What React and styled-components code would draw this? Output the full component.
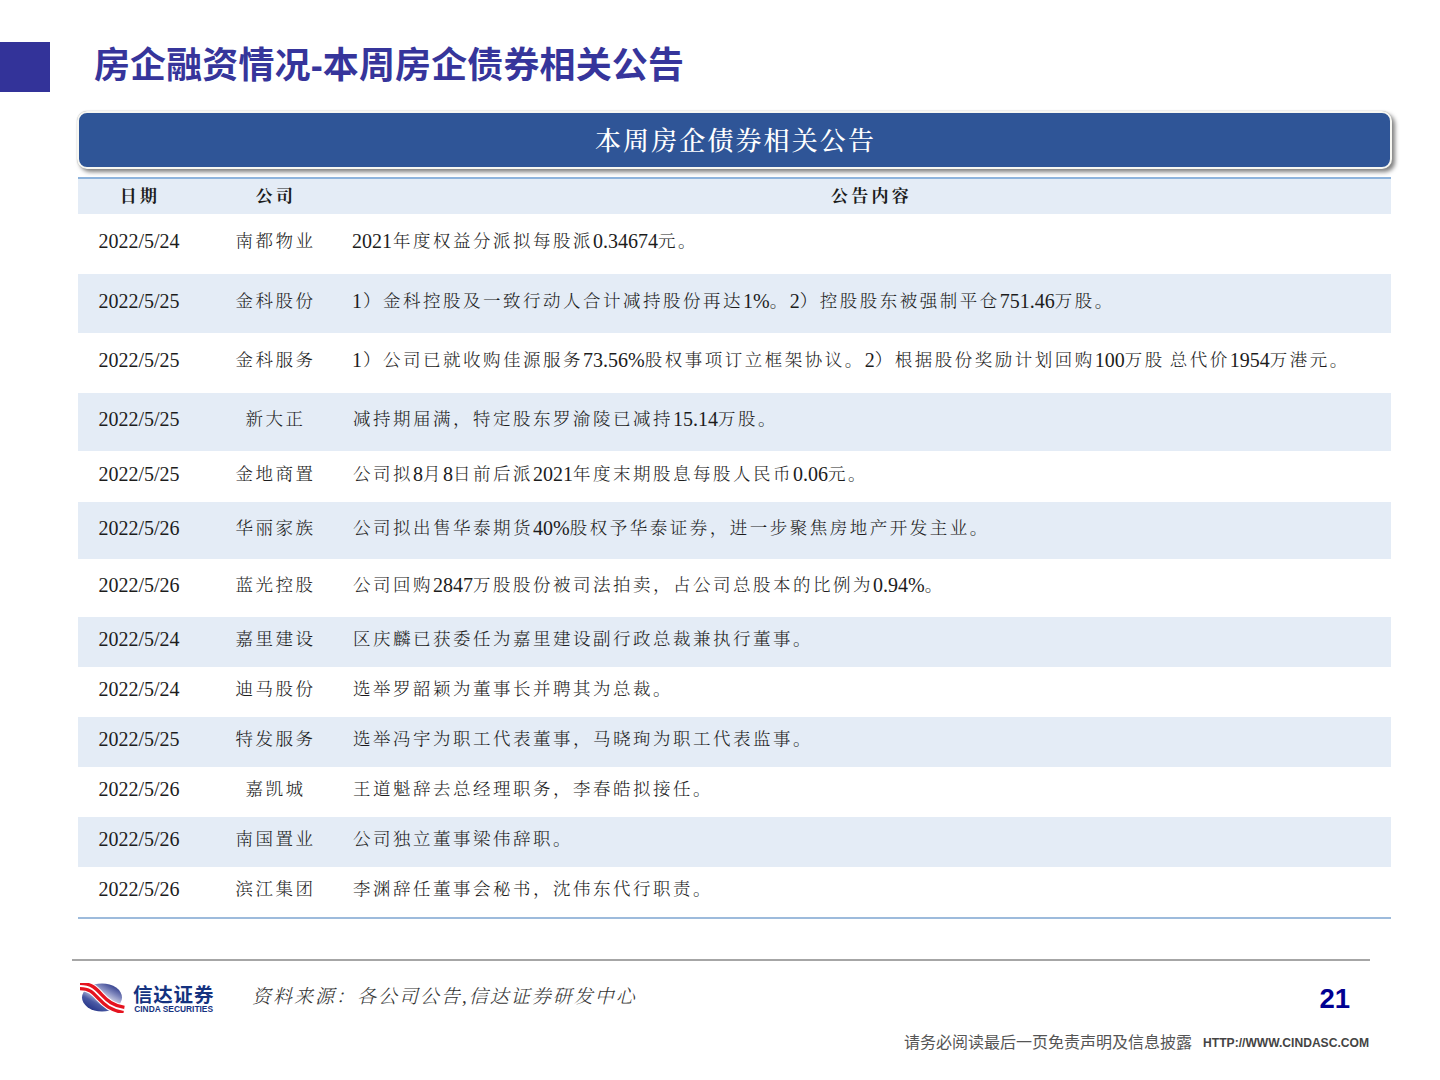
import React from "react";
import styled, { createGlobalStyle } from "styled-components";

const Global = createGlobalStyle`
  html, body { margin: 0; padding: 0; background: #fff; }
  body { font-family: "Liberation Serif", "Noto Serif CJK SC", "Noto Sans CJK SC", serif; }
`;

const Page = styled.div`
  width: 1440px;
  height: 1080px;
  display: flex;
  flex-direction: column;
  overflow: hidden;
`;
const TitleBar = styled.header`
  display: flex;
  align-items: center;
  gap: 44px;
  margin-top: 42px;
  height: 50px;
`;
const Square = styled.div`
  width: 50px;
  height: 50px;
  background: #333399;
`;
const Title = styled.h1`
  margin: 0;
  padding-bottom: 2px;
  font: bold 36px/48px "Liberation Sans", "Noto Sans CJK SC", sans-serif;
  letter-spacing: 0.12px;
  color: #36359b;
  white-space: nowrap;
`;
const Main = styled.main`
  width: 1313px;
  margin: 19px 0 0 78px;
  display: flex;
  flex-direction: column;
`;
const Banner = styled.div`
  height: 51px;
  padding: 3px 0 0 2px;
  border: 2px solid #f7f7f2;
  border-radius: 10px;
  background: #2f5597;
  box-shadow: 0 0 1px #9a9a9a, 3px 3px 4px rgba(0, 0, 0, 0.5);
  color: #fff;
  font-size: 26px;
  font-weight: 500;
  letter-spacing: 2.1px;
  line-height: 51px;
  text-align: center;
  margin: 0 -1px 8px -1px;
`;
const Grid = styled.div`
  border-top: 2px solid #8db3dc;
  border-bottom: 2px solid #9dbbdc;
`;
const Row = styled.div`
  display: grid;
  grid-template-columns: 122px 150px 1fr;
  align-items: center;
  height: ${(p) => p.$h}px;
  padding-bottom: ${(p) => (p.$head ? 0 : 6)}px;
  box-sizing: border-box;
  background: ${(p) => (p.$shade ? "#e4ecf6" : "#fff")};
  color: #1c1c1c;
  font-size: ${(p) => (p.$head ? 17 : 20)}px;
  font-weight: ${(p) => (p.$head ? 700 : 400)};
  line-height: 26px;
  white-space: nowrap;
`;
const Center = styled.div`
  text-align: center;
  letter-spacing: ${(p) => (p.$head ? 3.3 : 0)}px;
  text-indent: ${(p) => (p.$head ? 2 : 0)}px;
`;
const Body = styled.div`
  padding-left: 2px;
`;
const Cjk = styled.span`
  font-size: 17.5px;
  letter-spacing: 2.5px;
  font-weight: 300;
  vertical-align: 1px;
  margin-left: ${(p) => (p.$lead ? 1 : 0)}px;
`;
const Footer = styled.footer`
  margin: 40px 70px 0 72px;
  padding: 22px 0 0 7px;
  border-top: 2px solid #a6a6a6;
  display: flex;
  align-items: flex-start;
`;
const Logo = styled.div`
  display: flex;
  align-items: flex-start;
  gap: 8px;
  width: 173px;
  flex: none;
`;
const LogoWords = styled.div`
  display: flex;
  flex-direction: column;
  align-items: center;
  gap: 2px;
  color: #14327f;
  font-family: "Liberation Sans", "Noto Sans CJK SC", sans-serif;
  font-weight: 700;
  padding-top: 5px;
`;
const LogoCn = styled.span`
  font-size: 19.5px;
  line-height: 15px;
  letter-spacing: 0.8px;
`;
const LogoEn = styled.span`
  font-size: 8.4px;
  line-height: 8px;
  white-space: nowrap;
`;
const Source = styled.div`
  margin-top: 1px;
  font-size: 19px;
  font-style: italic;
  font-weight: 300;
  color: #333;
  letter-spacing: 2px;
  line-height: 26px;
  white-space: nowrap;
`;
const RightColumn = styled.div`
  margin-left: auto;
  display: flex;
  flex-direction: column;
  align-items: flex-end;
`;
const PageNo = styled.div`
  margin: 1px 20px 0 0;
  font: bold 27.5px/30px "Liberation Sans", sans-serif;
  color: #000092;
`;
const Notice = styled.div`
  display: flex;
  align-items: center;
  gap: 11px;
  margin-top: 15px;
  font-family: "Liberation Sans", "Noto Sans CJK SC", sans-serif;
`;
const Disclaimer = styled.span`
  font-size: 16px;
  color: #555;
`;
const Url = styled.span`
  margin-right: 1px;
  padding-top: 3px;
  font-size: 12.1px;
  font-weight: 700;
  color: #444;
`;

const rows = [
  ["2022/5/24", "南都物业", "2021年度权益分派拟每股派0.34674元。", 60, false],
  ["2022/5/25", "金科股份", "1）金科控股及一致行动人合计减持股份再达1%。2）控股股东被强制平仓751.46万股。", 59, true],
  ["2022/5/25", "金科服务", "1）公司已就收购佳源服务73.56%股权事项订立框架协议。2）根据股份奖励计划回购100万股 总代价1954万港元。", 60, false],
  ["2022/5/25", "新大正", "减持期届满，特定股东罗渝陵已减持15.14万股。", 58, true],
  ["2022/5/25", "金地商置", "公司拟8月8日前后派2021年度末期股息每股人民币0.06元。", 51, false],
  ["2022/5/26", "华丽家族", "公司拟出售华泰期货40%股权予华泰证券，进一步聚焦房地产开发主业。", 57, true],
  ["2022/5/26", "蓝光控股", "公司回购2847万股股份被司法拍卖，占公司总股本的比例为0.94%。", 58, false],
  ["2022/5/24", "嘉里建设", "区庆麟已获委任为嘉里建设副行政总裁兼执行董事。", 50, true],
  ["2022/5/24", "迪马股份", "选举罗韶颖为董事长并聘其为总裁。", 50, false],
  ["2022/5/25", "特发服务", "选举冯宇为职工代表董事，马晓珣为职工代表监事。", 50, true],
  ["2022/5/26", "嘉凯城", "王道魁辞去总经理职务，李春皓拟接任。", 50, false],
  ["2022/5/26", "南国置业", "公司独立董事梁伟辞职。", 50, true],
  ["2022/5/26", "滨江集团", "李渊辞任董事会秘书，沈伟东代行职责。", 50, false],
];

const Mixed = ({ text }) =>
  text.split(/([\u2E80-\uFFEF]+)/).map((part, i) =>
    /[\u2E80-\uFFEF]/.test(part) ? <Cjk key={i} $lead={i === 1}>{part}</Cjk> : part
  );

const LogoMark = () => (
  <svg width="46" height="30" viewBox="0 0 46 30">
    <defs>
      <linearGradient id="orb" x1="0.1" y1="1" x2="0.9" y2="0">
        <stop offset="0" stopColor="#16247c" />
        <stop offset="0.3" stopColor="#4a5aa4" />
        <stop offset="0.52" stopColor="#d8daea" />
        <stop offset="0.72" stopColor="#7f87bd" />
        <stop offset="1" stopColor="#101f78" />
      </linearGradient>
    </defs>
    <ellipse cx="23" cy="14.5" rx="20" ry="14" fill="url(#orb)" />
    <path d="M1 3 C12 3 16 8 21 13.5 C27 20 33 25 45 27" fill="none" stroke="#fff" strokeWidth="10.5" />
    <path d="M1 3 C12 3 16 8 21 13.5 C27 20 33 25 45 27" fill="none" stroke="#e5131f" strokeWidth="8.5" />
    <path d="M1 3 C12 3 16 8 21 13.5 C27 20 33 25 45 27" fill="none" stroke="#fff" strokeWidth="1.8" />
  </svg>
);

export default function App() {
  return (
    <Page>
      <Global />
      <TitleBar>
        <Square />
        <Title>房企融资情况-本周房企债券相关公告</Title>
      </TitleBar>
      <Main>
        <Banner>本周房企债券相关公告</Banner>
        <Grid>
          <Row $h={35} $head $shade>
            <Center $head>日期</Center>
            <Center $head>公司</Center>
            <Center $head>公告内容</Center>
          </Row>
          {rows.map(([d, c, t, h, s], i) => (
            <Row key={i} $h={h} $shade={s}>
              <Center>{d}</Center>
              <Center><Mixed text={c} /></Center>
              <Body><Mixed text={t} /></Body>
            </Row>
          ))}
        </Grid>
      </Main>
      <Footer>
        <Logo>
          <LogoMark />
          <LogoWords>
            <LogoCn>信达证券</LogoCn>
            <LogoEn>CINDA SECURITIES</LogoEn>
          </LogoWords>
        </Logo>
        <Source>资料来源：各公司公告,信达证券研发中心</Source>
        <RightColumn>
          <PageNo>21</PageNo>
          <Notice>
            <Disclaimer>请务必阅读最后一页免责声明及信息披露</Disclaimer>
            <Url>HTTP://WWW.CINDASC.COM</Url>
          </Notice>
        </RightColumn>
      </Footer>
    </Page>
  );
}
